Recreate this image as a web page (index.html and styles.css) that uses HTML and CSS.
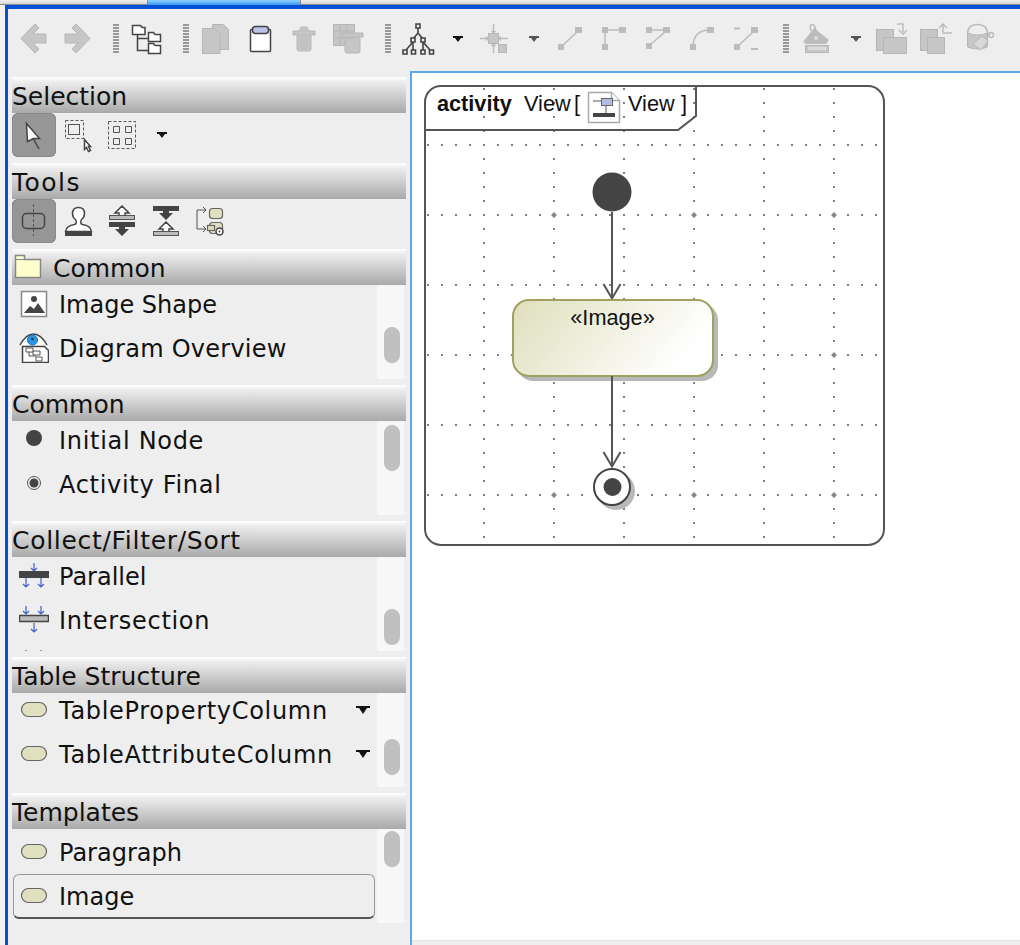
FILE: index.html
```html
<!DOCTYPE html>
<html lang="en">

<head>
    <meta charset="UTF-8">
    <meta name="viewport" content="width=device-width, initial-scale=1.0">
    <title>Activity View</title>
    <link rel="stylesheet" href="styles.css">
</head>

<body>

    <div class="tabstrip">
        <div class="tab"></div>
    </div>

    <div class="window">

        <div class="toolbar">
            <svg class="tb-icon" viewBox="12 22 44 34"><path class="off" d="M21 38.500L35 24l4 4-6 6h13v9H33l6 6-4 4z"/></svg>
            <svg class="tb-icon" viewBox="56 22 44 34"><path class="off" d="M90 38.500L76 24l-4 4 6 6H65v9h13l-6 6 4 4z"/></svg>
            <svg class="tb-grip-a" viewBox="100 22 24 34"><line class="grip" x1="116" y1="24" x2="116" y2="54"/></svg>
            <svg class="tb-icon" viewBox="124 22 44 34">
                <path class="ink" d="M137.500 34.500V50.500H148.500M137.500 38.500H148.500"/>
                <path class="ink-white" d="M132.500 25.500h8l1.500 2h3v7h-12.500zM148.500 32.500h5l1.500 2h5.500v7h-12zM148.500 43.500h5l1.500 2h5.500v8h-12z"/>
            </svg>
            <svg class="tb-grip" viewBox="168 22 25 34"><line class="grip" x1="186" y1="24" x2="186" y2="54"/></svg>
            <svg class="tb-icon" viewBox="193 22 44 34">
                <path class="off" d="M212.500 24.500h11l5 5v20h-16z"/>
                <path class="off" d="M202.500 28.500h12l5.500 5.500v19.500h-17.500z"/>
            </svg>
            <svg class="tb-icon" viewBox="237 22 44 34">
                <rect class="ink-white" x="250.500" y="29.500" width="20" height="22" rx="1"/>
                <rect class="ink-blue" x="252.500" y="26.500" width="16" height="7" rx="3"/>
            </svg>
            <svg class="tb-icon" viewBox="281 22 44 34">
                <path class="off" d="M293 31h7v-2q0-2 2-2h4q2 0 2 2v2h7v4h-22zM297 36h14v13q0 2-2 2h-10q-2 0-2-2z"/>
                <path class="off-line" d="M301 38v11M304 38v11M307 38v11"/>
            </svg>
            <svg class="tb-icon" viewBox="325 22 44 34">
                <rect class="off" x="333.500" y="24.500" width="21" height="21"/>
                <path class="off-line" d="M333 31h21M333 38h21M340 24v21M347 24v21"/>
                <path class="off" d="M342 33h21v4h-21zM345 38h15v13q0 2-2 2h-11q-2 0-2-2z"/>
            </svg>
            <svg class="tb-grip" viewBox="369 22 25 34"><line class="grip" x1="388" y1="24" x2="388" y2="54"/></svg>
            <svg class="tb-icon" viewBox="394 22 44 34">
                <path class="tree" d="M418 28v5M418 33l-5 6M418 33l5 6M413 42l-7 8M413 42v8M423 42v8M423 42l7 8"/>
                <path class="boxes" d="M416 24h4v4h-4zM411 38h4v4h-4zM421 38h4v4h-4zM403 50h4v4h-4zM411.500 50h4v4h-4zM421 50h4v4h-4zM429.500 50h4v4h-4z"/>
            </svg>
            <svg class="tb-caret" viewBox="438 22 32 34"><path class="caret" d="M453 36h10v2h-2l-3 4-3-4h-2z"/></svg>
            <svg class="tb-icon" viewBox="470 22 44 34">
                <rect class="off" x="488.500" y="33.500" width="10" height="10"/>
                <rect class="off" x="498.500" y="44.500" width="8" height="8"/>
                <path class="off-line" d="M480 38.500h8M486 36.500l2 2-2 2M499 38.500h9M501 36.500l-2 2 2 2M493.500 24v9M491.500 31l2 2 2-2M493.500 44v9M491.500 46l2-2 2 2"/>
            </svg>
            <svg class="tb-caret" viewBox="514 22 32 34"><path class="caret-off" d="M529 36h10v2h-2l-3 4-3-4h-2z"/></svg>
            <svg class="tb-icon" viewBox="546 22 44 34">
                <path class="off-line" d="M561 47l18-17"/>
                <path class="off-fill" d="M558 44h6v6h-6zM575 27h7v6h-7z"/>
            </svg>
            <svg class="tb-icon" viewBox="590 22 44 34">
                <path class="off-line" d="M605 30v16M605 30h18"/>
                <path class="off-fill" d="M602 27h6v6h-6zM619 27h7v6h-7zM602 44h6v6h-6z"/>
            </svg>
            <svg class="tb-icon" viewBox="634 22 44 34">
                <path class="off-line" d="M649 30h18L649 46"/>
                <path class="off-fill" d="M646 27h6v6h-6zM663 27h7v6h-7zM646 43h6v6h-6z"/>
            </svg>
            <svg class="tb-icon" viewBox="678 22 44 34">
                <path class="off-line" d="M693 47q0-17 17-17"/>
                <path class="off-fill" d="M690 44h6v6h-6zM707 27h7v6h-7z"/>
            </svg>
            <svg class="tb-icon" viewBox="722 22 44 34">
                <path class="off-line" d="M737 47l18-17"/>
                <path class="off-fill" d="M734 44h6v6h-6zM751 27h7v6h-7zM734 27.500h6v2h-6zM751 48h7v2h-7z"/>
            </svg>
            <svg class="tb-grip" viewBox="766 22 25 34"><line class="grip" x1="786" y1="24" x2="786" y2="54"/></svg>
            <svg class="tb-icon" viewBox="791 22 44 34">
                <path class="off-line" d="M811 31q-2-6 1-6.500t4 6.500"/>
                <path class="off-fill" d="M803 42l11-14 15 12-3 4h-20z"/>
                <circle class="off-hole" cx="816" cy="38" r="2"/>
                <rect class="off" x="805.500" y="45.500" width="23" height="7"/>
                <rect class="off-hole" x="808" y="47" width="18" height="3"/>
            </svg>
            <svg class="tb-caret" viewBox="835 22 32 34"><path class="caret-off" d="M851 36h10v2h-2l-3 4-3-4h-2z"/></svg>
            <svg class="tb-icon" viewBox="867 22 44 34">
                <rect class="off" x="876.500" y="29.500" width="17" height="21"/>
                <rect class="off" x="883.500" y="37.500" width="23" height="16"/>
                <path class="off-line" d="M897 24h6v8M899 30l4 4 4-4"/>
            </svg>
            <svg class="tb-icon" viewBox="911 22 44 34">
                <rect class="off" x="920.500" y="29.500" width="17" height="21"/>
                <rect class="off" x="927.500" y="37.500" width="17" height="16"/>
                <path class="off-line" d="M952 33h-9v-9M939 28l4-4 4 4"/>
            </svg>
            <svg class="tb-icon" viewBox="955 22 44 34">
                <path class="off-line" d="M967.500 34q0-9.500 10-9.500t10 9.500"/>
                <path class="off" d="M967.500 33q10 4 20 0v14q-10 4-20 0z"/>
                <path class="off-brush" d="M973 44l9-8 6 5-7 9z"/>
                <path class="off-line" d="M986 38l4-4"/>
                <circle class="off-line" cx="991" cy="35" r="2.500"/>
            </svg>
        </div>

        <div class="main">

            <div class="sidebar">

                <div class="header">Selection</div>
                <div class="tool-row">
                    <div class="tool active">
                        <svg class="tool-icon" viewBox="12 113 44 44">
                            <path class="ink-white" d="M26.500 123.500l13 15h-6l-6 3z"/>
                            <path class="ink" d="M33 138l6 11"/>
                        </svg>
                    </div>
                    <div class="tool">
                        <svg class="tool-icon" viewBox="56 113 44 44">
                            <rect class="dash" x="65.500" y="120.500" width="18" height="18"/>
                            <rect class="thin" x="68.500" y="124.500" width="11" height="10"/>
                            <path class="ink-white" d="M84.500 139.500l6 7h-2l2 4-2 1-2-4-2 2z"/>
                        </svg>
                    </div>
                    <div class="tool">
                        <svg class="tool-icon" viewBox="100 113 44 44">
                            <rect class="dash" x="108.500" y="121.500" width="27" height="27"/>
                            <path class="thin" d="M113.500 126.500h6v6h-6zM125.500 126.500h6v6h-6zM113.500 138.500h6v6h-6zM125.500 138.500h6v6h-6z"/>
                        </svg>
                    </div>
                    <svg class="tool-caret" viewBox="144 113 32 44"><path class="caret" d="M157 132h10v2h-2l-3 4-3-4h-2z"/></svg>
                </div>

                <div class="header spaced-xl">Tools</div>
                <div class="tool-row">
                    <div class="tool active">
                        <svg class="tool-icon" viewBox="12 199 44 44">
                            <rect class="ink" x="22.500" y="213.500" width="22" height="15" rx="4"/>
                            <path class="dash" d="M33.500 204v32"/>
                        </svg>
                    </div>
                    <div class="tool">
                        <svg class="tool-icon" viewBox="56 199 44 44">
                            <path class="ink-white" d="M65.500 231.500q1-6 9-7 3-1 1-5-3-2-3-6 0-6 6-6t6 6q0 4-3 6-2 4 1 5 8 1 9 7z"/>
                            <rect class="solid" x="65" y="232" width="27" height="4"/>
                        </svg>
                    </div>
                    <div class="tool">
                        <svg class="tool-icon" viewBox="100 199 44 44">
                            <path class="ink-white" d="M122 206l-7 7h4v3h6v-3h4z"/>
                            <rect class="grey-bar" x="109.500" y="215.500" width="25" height="4"/>
                            <rect class="solid" x="109" y="222" width="26" height="5"/>
                            <path class="solid" d="M122 236l-7-7h4v-3h6v3h4z"/>
                        </svg>
                    </div>
                    <div class="tool">
                        <svg class="tool-icon" viewBox="144 199 44 44">
                            <rect class="solid" x="153" y="206" width="26" height="5"/>
                            <path class="solid" d="M166 220l-7-7h4v-3h6v3h4z"/>
                            <path class="ink-white" d="M166 222l-7 7h4v3h6v-3h4z"/>
                            <rect class="grey-bar" x="153.500" y="231.500" width="25" height="4"/>
                        </svg>
                    </div>
                    <div class="tool">
                        <svg class="tool-icon" viewBox="188 199 44 44">
                            <path class="thin" d="M205 210h-8v19h9M203 207l3 3-3 3M203 226l3 3-3 3"/>
                            <rect class="pill" x="209.500" y="208.500" width="13" height="10" rx="3"/>
                            <rect class="pill" x="209.500" y="222.500" width="13" height="11" rx="3"/>
                            <rect class="pill" x="207.500" y="225.500" width="7" height="5"/>
                            <circle class="ink-white" cx="219.500" cy="231.500" r="3.500"/>
                            <circle class="solid" cx="219.500" cy="231.500" r="1"/>
                        </svg>
                    </div>
                </div>

                <div class="header header-folder">
                    <svg class="folder" viewBox="0 0 28 26">
                        <path class="folder-shape" d="M1.500 1.500h9v4h16v18h-25z"/>
                        <path class="folder-line" d="M1.500 5.500h9"/>
                    </svg>
                    Common
                </div>
                <div class="palette">
                    <div class="rows offset-3">
                        <div class="row">
                            <svg class="row-icon" viewBox="0 0 30 30">
                                <rect class="image-frame" x="2.500" y="2.500" width="25" height="25"/>
                                <circle class="solid" cx="15" cy="10" r="3"/>
                                <path class="solid" d="M5 24l6-7 4 3 4-6 7 10z"/>
                            </svg>
                            <span>Image Shape</span>
                        </div>
                        <div class="row">
                            <svg class="row-icon" viewBox="0 0 30 30">
                                <path class="ink-white" d="M3.500 13.500h22l4 4v12h-26z"/>
                                <path class="ink-white" d="M1 12q6-11 13.500-11T28 12"/>
                                <circle class="iris" cx="13.500" cy="7" r="5"/>
                                <circle class="solid" cx="13.500" cy="6" r="1.500"/>
                                <path class="thin" d="M7 15h7v4H7zM14 18h7v4h-7zM17 24h6v4h-6zM10 19v4h7"/>
                            </svg>
                            <span class="spaced-s">Diagram Overview</span>
                        </div>
                        <div class="row">
                            <svg class="row-icon" viewBox="0 0 30 30"><path class="ink" d="M2 8.500h26"/></svg>
                        </div>
                    </div>
                    <div class="track"><div class="thumb thumb-common"></div></div>
                </div>

                <div class="gap"></div>
                <div class="header">Common</div>
                <div class="palette">
                    <div class="rows offset-3">
                        <div class="row">
                            <svg class="row-icon" viewBox="0 0 30 30"><circle class="solid" cx="15" cy="13" r="8"/></svg>
                            <span class="spaced">Initial Node</span>
                        </div>
                        <div class="row">
                            <svg class="row-icon" viewBox="0 0 30 30">
                                <circle class="ring" cx="15" cy="14" r="6.500"/>
                                <circle class="solid" cx="15" cy="14" r="4.500"/>
                            </svg>
                            <span class="spaced">Activity Final</span>
                        </div>
                    </div>
                    <div class="track"><div class="thumb thumb-nodes"></div></div>
                </div>

                <div class="gap"></div>
                <div class="header spaced">Collect/Filter/Sort</div>
                <div class="palette">
                    <div class="rows offset-3">
                        <div class="row">
                            <svg class="row-icon" viewBox="0 0 30 30">
                                <rect class="solid" x="0" y="10" width="30" height="7"/>
                                <path class="arrow" d="M15 2v8M12 7l3 3 3-3M7 17v9M4 23l3 3 3-3M22 17v9M19 23l3 3 3-3"/>
                            </svg>
                            <span>Parallel</span>
                        </div>
                        <div class="row">
                            <svg class="row-icon" viewBox="0 0 30 30">
                                <rect class="double" x="0.500" y="10.500" width="29" height="6"/>
                                <path class="arrow" d="M7 1v8M4 6l3 3 3-3M22 1v8M19 6l3 3 3-3M15 18v9M12 24l3 3 3-3"/>
                            </svg>
                            <span class="spaced">Intersection</span>
                        </div>
                        <div class="row">
                            <svg class="row-icon" viewBox="0 0 30 30">
                                <path class="arrow" d="M7 1v8M4 6l3 3 3-3M22 1v8M19 6l3 3 3-3"/>
                            </svg>
                        </div>
                    </div>
                    <div class="track"><div class="thumb thumb-collect"></div></div>
                </div>

                <div class="gap"></div>
                <div class="header">Table Structure</div>
                <div class="palette">
                    <div class="rows offset-5">
                        <div class="row">
                            <svg class="row-icon" viewBox="0 0 30 30"><rect class="pill" x="2.500" y="7.500" width="25" height="14" rx="7"/></svg>
                            <span class="spaced">TablePropertyColumn</span>
                            <svg class="row-caret" viewBox="0 0 14 8"><path class="caret" d="M0 0h14v2h-3l-4 6-4-6H0z"/></svg>
                        </div>
                        <div class="row">
                            <svg class="row-icon" viewBox="0 0 30 30"><rect class="pill" x="2.500" y="7.500" width="25" height="14" rx="7"/></svg>
                            <span class="spaced">TableAttributeColumn</span>
                            <svg class="row-caret" viewBox="0 0 14 8"><path class="caret" d="M0 0h14v2h-3l-4 6-4-6H0z"/></svg>
                        </div>
                        <div class="row">
                            <svg class="row-icon" viewBox="0 0 30 30"><path class="faint" d="M5 10.500h18"/></svg>
                        </div>
                    </div>
                    <div class="track"><div class="thumb thumb-table"></div></div>
                </div>

                <div class="gap"></div>
                <div class="header">Templates</div>
                <div class="palette">
                    <div class="rows offset-plus">
                        <div class="row">
                            <svg class="row-icon" viewBox="0 0 30 30"><rect class="pill" x="2.500" y="7.500" width="25" height="14" rx="7"/></svg>
                            <span>Paragraph</span>
                        </div>
                        <div class="row row-picked">
                            <svg class="row-icon" viewBox="0 0 30 30"><rect class="pill" x="2.500" y="7.500" width="25" height="14" rx="7"/></svg>
                            <span>Image</span>
                        </div>
                    </div>
                    <div class="track"><div class="thumb thumb-templates"></div></div>
                </div>

            </div>

            <div class="canvas">
                <svg class="diagram" viewBox="412 73 608 867">
                    <defs>
                        <linearGradient id="actionFill" x1="0" y1="0" x2="1" y2="0.300">
                            <stop offset="0" stop-color="#dfdfbd"/>
                            <stop offset="1" stop-color="#ffffff"/>
                        </linearGradient>
                        <clipPath id="frameClip">
                            <rect x="425" y="86" width="459" height="458" rx="16"/>
                        </clipPath>
                    </defs>

                    <g class="grid" clip-path="url(#frameClip)">
                        <path d="M427 145H884M427 215H884M427 285H884M427 355H884M427 425H884M427 495H884"/>
                        <path d="M484 88V544M554 88V544M624 88V544M694 88V544M764 88V544M834 88V544"/>
                    </g>
                    <path class="grid-major" d="M554 212l3 3-3 3-3-3zM694 212l3 3-3 3-3-3zM834 212l3 3-3 3-3-3zM554 352l3 3-3 3-3-3zM834 352l3 3-3 3-3-3zM554 492l3 3-3 3-3-3zM694 492l3 3-3 3-3-3zM834 492l3 3-3 3-3-3z"/>

                    <rect class="frame" x="425" y="86" width="459" height="459" rx="16"/>
                    <path class="frame" d="M425 130H678L696 116V86"/>
                    <text class="frame-kind" x="437" y="111">activity</text>
                    <text class="frame-text" x="524" y="111">View</text>
                    <text class="frame-text" x="574" y="111">[</text>
                    <path class="doc" d="M588.500 92.500h23l8 8v22h-31z"/>
                    <path class="doc" d="M611.500 92.500v8h8"/>
                    <path class="thin" d="M593 101h8M606 105v9"/>
                    <rect class="doc-box" x="601.500" y="98.500" width="11" height="7"/>
                    <rect class="solid" x="593" y="113" width="22" height="4"/>
                    <text class="frame-text" x="628" y="111">View</text>
                    <text class="frame-text" x="681" y="111">]</text>

                    <circle class="solid" cx="612" cy="192" r="19.500"/>
                    <path class="flow" d="M612 212V298M603.500 284L612 298.500 620.500 284"/>

                    <rect class="shadow" x="517" y="304" width="201" height="77" rx="16"/>
                    <rect class="action" x="513" y="300" width="200" height="76" rx="16"/>
                    <text class="action-text" x="612.500" y="325">«Image»</text>

                    <path class="flow" d="M612 376V466M603.500 452L612 466.500 620.500 452"/>

                    <circle class="shadow" cx="616" cy="491" r="19"/>
                    <circle class="final-ring" cx="612" cy="487" r="18"/>
                    <circle class="solid" cx="612.500" cy="487" r="9"/>
                </svg>
                <div class="canvas-foot"></div>
            </div>

        </div>
    </div>

</body>

</html>
```

FILE: styles.css
```css
* {
    box-sizing: border-box;
}

html,
body {
    height: 100%;
}

body {
    margin: 0;
    overflow: hidden;
    background: #f2f2f2;
    display: flex;
    flex-direction: column;
    font-family: 'DejaVu Sans', sans-serif;
    color: #111;
}

.tabstrip {
    height: 5px;
    flex: none;
    background: linear-gradient(#f0f0f0, #d8d8d8 70%, #666);
}

.tab {
    width: 154px;
    height: 5px;
    margin-left: 147px;
    background: linear-gradient(#8fd4ff, #3a95ee);
    border-left: 1px solid #888;
    border-right: 1px solid #888;
}

.window {
    flex: 1;
    display: flex;
    flex-direction: column;
    min-height: 0;
    margin-left: 5px;
    border-top: 4px solid #0050d8;
    border-left: 3px solid #0050d8;
    background: #eeeeee;
}

/* top toolbar */
.toolbar {
    flex: none;
    height: 62px;
    padding: 13px 0 0 4px;
    display: flex;
    align-items: flex-start;
}

.tb-icon {
    width: 44px;
    height: 34px;
    flex: none;
}

.tb-grip-a {
    width: 24px;
    height: 34px;
    flex: none;
}

.tb-grip {
    width: 25px;
    height: 34px;
    flex: none;
}

.tb-caret {
    width: 32px;
    height: 34px;
    flex: none;
}

.main {
    flex: 1;
    display: flex;
    min-height: 0;
}

/* left palette */
.sidebar {
    width: 402px;
    flex: none;
    padding: 6px 4px 0 4px;
    display: flex;
    flex-direction: column;
}

.header {
    height: 36px;
    flex: none;
    display: flex;
    align-items: center;
    padding-top: 3px;
    font-size: 25px;
    line-height: 33px;
    background: linear-gradient(#ffffff, #ececec 14%, #a9a9a9);
}

.header-folder {
    gap: 11px;
    padding-left: 2px;
}

.folder {
    width: 28px;
    height: 26px;
    margin-top: -3px;
}

.tool-row {
    height: 50px;
    flex: none;
    display: flex;
    align-items: flex-start;
}

.tool {
    width: 44px;
    height: 44px;
    flex: none;
}

.tool.active {
    background: #969696;
    border-radius: 6px;
    box-shadow: inset 0 0 0 1px #8a8a8a;
}

.tool-icon {
    width: 44px;
    height: 44px;
    display: block;
}

.tool-caret {
    width: 32px;
    height: 44px;
    flex: none;
}

.palette {
    height: 94px;
    flex: none;
    margin-right: 2px;
    display: flex;
    overflow: hidden;
}

.rows {
    flex: 1;
    min-width: 0;
}

.offset-3 {
    margin-top: -3px;
}

.offset-5 {
    margin-top: -5px;
}

.offset-plus {
    margin-top: 1px;
}

.row {
    height: 44px;
    display: flex;
    align-items: center;
    gap: 10px;
    padding-left: 7px;
    font-size: 24px;
    white-space: nowrap;
}

.row span {
    position: relative;
    top: 1px;
}

.spaced {
    letter-spacing: 0.7px;
}

.spaced-s {
    letter-spacing: 0.25px;
}

.spaced-xl {
    letter-spacing: 1.5px;
}

.row-picked {
    position: relative;
}

.row-picked::after {
    content: "";
    position: absolute;
    left: 1px;
    right: 2px;
    top: 0;
    height: 42px;
    border: 1px solid #999;
    border-bottom: 2px solid #555;
    border-radius: 6px;
    pointer-events: none;
}

.row-icon {
    width: 30px;
    height: 30px;
    flex: none;
}

.row-caret {
    width: 14px;
    height: 8px;
    margin-left: auto;
    margin-right: 7px;
    flex: none;
}

.track {
    width: 27px;
    flex: none;
    background: #f7f7f7;
    padding-left: 7px;
}

.thumb {
    width: 16px;
    height: 36px;
    border-radius: 8px;
    background: #c0c0c0;
}

.thumb-common {
    margin-top: 42px;
}

.thumb-nodes {
    margin-top: 4px;
    height: 46px;
}

.thumb-collect {
    margin-top: 52px;
}

.thumb-table {
    margin-top: 46px;
}

.thumb-templates {
    margin-top: 2px;
}

.gap {
    height: 6px;
    flex: none;
}

/* diagram area */
.canvas {
    flex: 1;
    min-width: 0;
    background: #fff;
    border-top: 2px solid #5ba8ea;
    border-left: 2px solid #5ba8ea;
}

.diagram {
    display: block;
    width: 608px;
    height: 867px;
}

.canvas-foot {
    height: 5px;
    background: #eeeeee;
    border-top: 1px solid #e2e2e2;
}

/* svg paints */
.off {
    fill: #c6c6c6;
    stroke: #b6b6b6;
}

.off-fill {
    fill: #bcbcbc;
}

.off-line {
    fill: none;
    stroke: #bcbcbc;
    stroke-width: 1.5;
}

.off-hole {
    fill: #dcdcdc;
}

.off-brush {
    fill: #d8d8d8;
    stroke: #b6b6b6;
}

.grip {
    stroke: #999;
    stroke-width: 6;
    stroke-dasharray: 2 1;
}

.ink {
    fill: none;
    stroke: #444;
    stroke-width: 1.5;
}

.ink-white {
    fill: #fff;
    stroke: #444;
    stroke-width: 1.5;
}

.ink-blue {
    fill: #bcc4e6;
    stroke: #444;
    stroke-width: 1.5;
}

.tree {
    fill: none;
    stroke: #444;
    stroke-width: 1.6;
}

.boxes {
    fill: #eee;
    stroke: #444;
    stroke-width: 1.6;
}

.caret {
    fill: #111;
}

.caret-off {
    fill: #555;
}

.dash {
    fill: none;
    stroke: #555;
    stroke-width: 1;
    stroke-dasharray: 3 2;
}

.thin {
    fill: none;
    stroke: #555;
    stroke-width: 1;
}

.solid {
    fill: #444;
}

.grey-bar {
    fill: #bbb;
    stroke: #555;
}

.pill {
    fill: #e0e0c0;
    stroke: #666;
    stroke-width: 1.2;
}

.folder-shape {
    fill: #ffffcc;
    stroke: #888;
    stroke-width: 1.5;
}

.folder-line {
    stroke: #888;
    fill: none;
}

.image-frame {
    fill: #fff;
    stroke: #888;
    stroke-width: 1.5;
}

.iris {
    fill: #2a96e8;
    stroke: #1470c0;
}

.ring {
    fill: #eee;
    stroke: #555;
    stroke-width: 1;
}

.arrow {
    fill: none;
    stroke: #4060d0;
    stroke-width: 1.2;
}

.double {
    fill: #bbb;
    stroke: #444;
    stroke-width: 1.5;
}

.faint {
    stroke: #ccc;
    stroke-dasharray: 2 1;
}

.grid path {
    fill: none;
    stroke: #808080;
    stroke-width: 2;
    stroke-dasharray: 2 12;
}

.grid-major {
    fill: #888;
}

.frame {
    fill: none;
    stroke: #555;
    stroke-width: 2;
}

.frame-kind {
    font-family: 'Liberation Sans', sans-serif;
    font-weight: bold;
    font-size: 21.7px;
    fill: #111;
}

.frame-text,
.action-text {
    font-family: 'Liberation Sans', sans-serif;
    font-size: 21.7px;
    fill: #111;
}

.action-text {
    text-anchor: middle;
}

.doc {
    fill: #fff;
    stroke: #aaa;
    stroke-width: 1.5;
}

.doc-box {
    fill: #b4bce0;
    stroke: #666;
}

.flow {
    fill: none;
    stroke: #555;
    stroke-width: 2;
}

.shadow {
    fill: #b8b8b8;
}

.action {
    fill: url(#actionFill);
    stroke: #a0a060;
    stroke-width: 2;
}

.final-ring {
    fill: #fff;
    stroke: #444;
    stroke-width: 2;
}
```
